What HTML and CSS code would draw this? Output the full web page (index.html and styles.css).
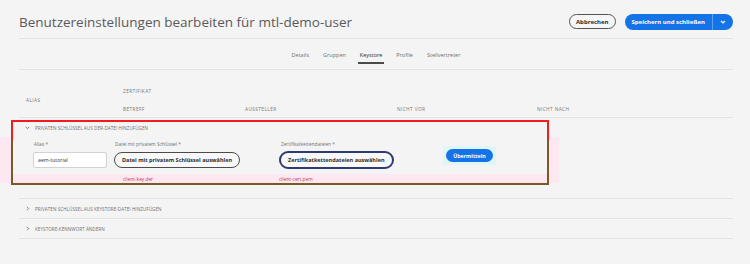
FILE: index.html
```html
<!DOCTYPE html>
<html lang="de">
<head>
    <meta charset="UTF-8">
    <title>Benutzereinstellungen bearbeiten</title>
    <link rel="stylesheet" href="styles.css">
</head>
<body>
    <div class="page">
        <header class="topbar">
            <h1 class="title">Benutzereinstellungen bearbeiten für mtl-demo-user</h1>
            <div class="actions">
                <button class="btn btn-outline">Abbrechen</button>
                <div class="split">
                    <button class="btn btn-primary split-main">Speichern und schließen</button>
                    <button class="btn btn-primary split-toggle">
                        <svg width="6" height="4" viewBox="0 0 6 4"><path d="M1 1l2 2 2-2" fill="none" stroke="#fff" stroke-width="1.1"/></svg>
                    </button>
                </div>
            </div>
        </header>

        <nav class="tabs">
            <a class="tab">Details</a>
            <a class="tab">Gruppen</a>
            <a class="tab active">Keystore</a>
            <a class="tab">Profile</a>
            <a class="tab">Stellvertreter</a>
        </nav>

        <div class="thead">
            <div class="th th-alias">Alias</div>
            <div class="th th-group">Zertifikat</div>
            <div class="th">Betreff</div>
            <div class="th">Aussteller</div>
            <div class="th">Nicht vor</div>
            <div class="th">Nicht nach</div>
        </div>

        <section class="upload">
            <div class="acc-head">
                <svg class="chev" width="5" height="4" viewBox="0 0 5 4"><path d="M.8 1l1.7 1.7L4.2 1" fill="none" stroke="#6e6e6e" stroke-width=".9"/></svg>
                <span>Privaten Schlüssel aus DER-Datei hinzufügen</span>
            </div>
            <div class="upload-form">
                <label class="lbl">Alias *</label>
                <label class="lbl">Datei mit privatem Schlüssel *</label>
                <label class="lbl lbl-cert">Zertifikatkettendateien *</label>
                <div class="submit-wrap">
                    <button class="btn btn-primary submit">Übermitteln</button>
                </div>
                <input class="alias-input" type="text" value="aem-tutorial">
                <div class="cell"><button class="pill">Datei mit privatem Schlüssel auswählen</button></div>
                <div class="cell"><button class="pill pill-focus">Zertifikatkettendateien auswählen</button></div>
            </div>
            <div class="files">
                <span></span>
                <span class="file file-key">client-key.der</span>
                <span class="file">client-cert.pem</span>
            </div>
        </section>

        <div class="acc-list">
            <div class="acc-row">
                <svg class="chev" width="4" height="5" viewBox="0 0 4 5"><path d="M1 .8l1.7 1.7L1 4.2" fill="none" stroke="#6e6e6e" stroke-width=".9"/></svg>
                <span>Privaten Schlüssel aus Keystore-Datei hinzufügen</span>
            </div>
            <div class="acc-row">
                <svg class="chev" width="4" height="5" viewBox="0 0 4 5"><path d="M1 .8l1.7 1.7L1 4.2" fill="none" stroke="#6e6e6e" stroke-width=".9"/></svg>
                <span>Keystore-Kennwort ändern</span>
            </div>
        </div>
    </div>
</body>
</html>
```

FILE: styles.css
```css
* {
    box-sizing: border-box;
}

body {
    margin: 0;
    background: #f4f4f4;
    font-family: 'Open Sans', 'Liberation Sans', sans-serif;
    color: #4b4b4b;
}

.page {
    padding: 0 17px 0 19px;
}

/* header */
.topbar {
    display: flex;
    align-items: center;
    justify-content: space-between;
    height: 39px;
    padding-top: 5px;
    border-bottom: 1px solid #e4e4e4;
}

.title {
    margin: 0;
    font-family: 'Liberation Sans Narrow', 'Open Sans', sans-serif;
    font-weight: 400;
    font-size: 13.5px;
    color: #5a5a5a;
}

.actions {
    display: flex;
    align-items: center;
    gap: 9px;
}

.btn {
    height: 16px;
    border-radius: 8px;
    font-family: 'Open Sans', sans-serif;
    font-weight: 700;
    font-size: 6px;
    padding: 0 6px;
    cursor: pointer;
}

.btn-outline {
    height: 15px;
    background: #f6f6f6;
    border: 1.5px solid #555;
    color: #2c2c2c;
}

.btn-primary {
    background: #1473e6;
    border: none;
    color: #fff;
}

.split {
    display: flex;
}

.split-main {
    border-radius: 8px 0 0 8px;
    padding: 0 7px;
}

.split-toggle {
    width: 21px;
    border-radius: 0 8px 8px 0;
    border-left: 1px solid #5a9ff0;
    display: flex;
    align-items: center;
    justify-content: center;
    padding: 0;
}

/* tabs */
.tabs {
    display: flex;
    justify-content: center;
    gap: 14px;
    height: 31px;
    border-bottom: 1px solid #e4e4e4;
}

.tab {
    padding-top: 12px;
    font-size: 5.5px;
    line-height: 8px;
    color: #707070;
}

.tab.active {
    color: #2c2c2c;
}

.tab.active::after {
    content: "";
    display: block;
    height: 2px;
    margin: 3px -2px 0;
    background: #4b4b4b;
}

/* table head */
.thead {
    display: grid;
    grid-template-columns: 97px 122px 152px 140px 1fr;
    grid-template-rows: 18px 17px;
    padding: 12px 0 0 7px;
    border-bottom: 1px solid #e4e4e4;
}

.th {
    display: flex;
    align-items: center;
    font-size: 4.8px;
    letter-spacing: .08em;
    text-transform: uppercase;
    color: #777;
}

.th-alias {
    grid-row: 1 / 3;
}

.th-group {
    grid-column: 2 / 6;
}

/* opened upload section */
.upload {
    position: relative;
    width: 538px;
    margin: 2px 0 0 -8px;
    border: 2px solid #7b5a26;
}

/* red highlight over the upper part of the frame */
.upload::after {
    content: "";
    position: absolute;
    top: -2px;
    left: -2px;
    right: -2px;
    height: 18px;
    border: 2px solid #f21c1c;
    border-bottom: none;
    pointer-events: none;
}

.upload::before {
    content: "";
    position: absolute;
    left: -13px;
    right: -12px;
    top: 15px;
    bottom: 0;
    background: #fde8f1;
    z-index: -1;
}

.acc-head,
.acc-row {
    display: flex;
    align-items: center;
    gap: 5px;
    font-size: 4.6px;
    letter-spacing: .01em;
    text-transform: uppercase;
    color: #707070;
}

.acc-head {
    height: 12px;
    padding-left: 12px;
    background: #f4f4f4;
}

.upload-form {
    display: grid;
    grid-template-columns: 81px 165px 167px auto;
    grid-template-rows: 7px 16px;
    row-gap: 4px;
    padding: 7px 0 6px 20px;
    background: #f4f4f4;
}

.lbl {
    font-size: 4.7px;
    line-height: 7px;
    color: #707070;
    padding-left: 1px;
}

.lbl-cert {
    padding-left: 2px;
}

.cell {
    display: flex;
    align-items: center;
}

.alias-input {
    width: 74px;
    height: 16px;
    border: 1px solid #d2d2d2;
    border-radius: 2px;
    background: #fff;
    padding: 0 4px;
    font-family: 'Open Sans', sans-serif;
    font-size: 5.2px;
    color: #333;
}

.pill {
    height: 16px;
    padding: 0 7px;
    border: 1.5px solid #4b4b4b;
    border-radius: 8px;
    background: #f8f8f8;
    font-family: 'Open Sans', sans-serif;
    font-weight: 700;
    font-size: 5.5px;
    color: #2c2c2c;
}

.pill-focus {
    height: 18px;
    border: 2px solid #2f3a72;
    border-radius: 9px;
}

.submit-wrap {
    grid-column: 4;
    grid-row: 1 / 3;
    justify-self: start;
    align-self: start;
    margin: 5px 0 0 -3px;
    padding: 3px;
    background: #dff6f7;
}

.submit {
    display: block;
    height: 13px;
    width: 47px;
    padding: 0;
    border-radius: 7px;
    font-size: 5.3px;
}

.files {
    display: grid;
    grid-template-columns: 81px 165px 167px;
    height: 9px;
    padding-left: 20px;
    align-items: center;
    font-size: 4.8px;
    color: #c2335e;
}

.file-key {
    padding-left: 9px;
}

/* collapsed sections */
.acc-list {
    margin-top: 13px;
    border-top: 1px solid #e4e4e4;
}

.acc-row {
    height: 20px;
    padding-left: 7px;
    border-bottom: 1px solid #e4e4e4;
}
```
